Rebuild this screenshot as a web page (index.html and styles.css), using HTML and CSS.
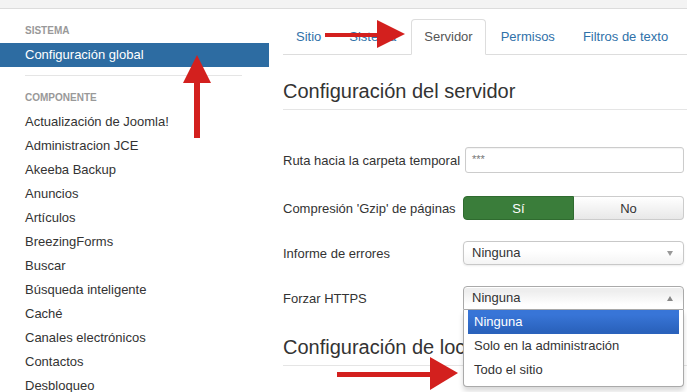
FILE: index.html
```html
<!DOCTYPE html>
<html lang="es">
<head>
<meta charset="utf-8">
<title>Configuración global</title>
<link rel="stylesheet" href="styles.css">
</head>
<body>
<div class="topbar"></div>
<div class="layout">
  <aside class="sidebar">
    <div class="nav-header">Sistema</div>
    <a class="nav-item active">Configuración global</a>
    <div class="divider"></div>
    <div class="nav-header">Componente</div>
    <a class="nav-item">Actualización de Joomla!</a>
    <a class="nav-item">Administracion JCE</a>
    <a class="nav-item">Akeeba Backup</a>
    <a class="nav-item">Anuncios</a>
    <a class="nav-item">Artículos</a>
    <a class="nav-item">BreezingForms</a>
    <a class="nav-item">Buscar</a>
    <a class="nav-item">Búsqueda inteligente</a>
    <a class="nav-item">Caché</a>
    <a class="nav-item">Canales electrónicos</a>
    <a class="nav-item">Contactos</a>
    <a class="nav-item">Desbloqueo</a>
  </aside>
  <main class="main">
    <ul class="tabs">
      <li><a class="tab">Sitio</a></li>
      <li><a class="tab">Sistema</a></li>
      <li><a class="tab active">Servidor</a></li>
      <li><a class="tab">Permisos</a></li>
      <li><a class="tab">Filtros de texto</a></li>
    </ul>
    <h2 class="section-title">Configuración del servidor</h2>
    <div class="form">
      <div class="row row-first">
        <label class="label">Ruta hacia la carpeta temporal</label>
        <div class="input">***</div>
      </div>
      <div class="row row-second">
        <label class="label">Compresión 'Gzip' de páginas</label>
        <div class="btn-group">
          <span class="btn btn-yes">Sí</span>
          <span class="btn btn-no">No</span>
        </div>
      </div>
      <div class="row">
        <label class="label">Informe de errores</label>
        <div class="chosen">
          <div class="chosen-single">Ninguna<span class="caret-down"></span></div>
        </div>
      </div>
      <div class="row">
        <label class="label">Forzar HTTPS</label>
        <div class="chosen open">
          <div class="chosen-single">Ninguna<span class="caret-up"></span></div>
          <div class="chosen-drop">
            <ul class="results">
              <li class="result highlighted">Ninguna</li>
              <li class="result">Solo en la administración</li>
              <li class="result">Todo el sitio</li>
            </ul>
          </div>
        </div>
      </div>
    </div>
    <h2 class="section-title second">Configuración de localización</h2>
  </main>
</div>
<svg class="arrows" width="687" height="392" viewBox="0 0 687 392" aria-hidden="true">
  <g fill="#d3201e">
    <rect x="194" y="80" width="6" height="58"/>
    <polygon points="197,55 211,83 183,83"/>
    <rect x="325" y="33" width="55" height="4"/>
    <polygon points="377,20 405,34 377,48"/>
    <rect x="337" y="372" width="95" height="5"/>
    <polygon points="430,357 458,373 430,390"/>
  </g>
</svg>
</body>
</html>
```
FILE: styles.css
```css
* { box-sizing: border-box; }

html, body {
  margin: 0;
  padding: 0;
  height: 100%;
  overflow: hidden;
  background: #fff;
}

body {
  position: relative;
  font-family: "Liberation Sans", Arial, sans-serif;
  font-size: 13px;
  color: #333;
}

.topbar {
  height: 9px;
  background: #f3f3f3;
  border-bottom: 1px solid #dcdcdc;
}

.layout {
  display: flex;
}

.sidebar {
  width: 269px;
  flex: none;
  padding-top: 10px;
  display: flex;
  flex-direction: column;
}

.nav-header {
  padding-left: 25px;
  line-height: 24px;
  font-size: 10px;
  font-weight: bold;
  text-transform: uppercase;
  color: #999;
}

.nav-item {
  display: block;
  padding-left: 25px;
  line-height: 24px;
  color: #333;
}

.nav-item.active {
  background: #2d6ca2;
  color: #fff;
}

.divider {
  height: 1px;
  background: #e5e5e5;
  margin: 8px 27px 10px 25px;
}

.main {
  flex: 1;
  min-width: 0;
  padding-left: 14px;
}

.tabs {
  display: flex;
  list-style: none;
  margin: 10px 0 0;
  padding: 0;
  border-bottom: 1px solid #ddd;
}

.tab {
  display: block;
  padding: 8px 12px;
  line-height: 18px;
  margin-right: 2px;
  margin-bottom: -1px;
  border: 1px solid transparent;
  border-radius: 4px 4px 0 0;
  color: #3071a9;
  white-space: nowrap;
}

.tab.active {
  color: #555;
  background: #fff;
  border-color: #ddd #ddd transparent;
}

.section-title {
  margin: 24px 0 0;
  padding-bottom: 6px;
  font-size: 20px;
  font-weight: normal;
  line-height: 24px;
  color: #333;
  border-bottom: 1px solid #e5e5e5;
  white-space: nowrap;
}

.form {
  margin-top: 37px;
}

.row {
  display: flex;
  align-items: center;
  height: 26px;
  margin-top: 19px;
}

.row-first {
  margin-top: 0;
}

.row-second {
  margin-top: 22px;
}

.label {
  width: 180px;
  flex: none;
  white-space: nowrap;
}

.input {
  width: 219px;
  height: 26px;
  margin-left: 2px;
  border: 1px solid #ccc;
  border-radius: 3px;
  padding: 3px 6px;
  color: #777;
  font-size: 11px;
  line-height: 16px;
  box-shadow: inset 0 1px 1px rgba(0,0,0,0.05);
}

.btn-group {
  display: flex;
  width: 221px;
  height: 24px;
}

.btn {
  flex: 1;
  display: flex;
  align-items: center;
  justify-content: center;
  border: 1px solid #ccc;
}

.btn-yes {
  background: #3a7d3a;
  border-color: #2f6b2f;
  color: #fff;
  border-radius: 4px 0 0 4px;
}

.btn-no {
  background: linear-gradient(#fff, #e8e8e8);
  border-left: 0;
  border-radius: 0 4px 4px 0;
  color: #333;
}

.chosen {
  position: relative;
  width: 221px;
  height: 24px;
}

.chosen-single {
  position: relative;
  height: 24px;
  line-height: 22px;
  padding-left: 8px;
  border: 1px solid #c8c8c8;
  border-radius: 4px;
  background: linear-gradient(#fff 40%, #f4f4f4);
  box-shadow: 0 1px 2px rgba(0,0,0,0.08);
  color: #333;
}

.open .chosen-single {
  border-color: #aaa;
  border-radius: 4px 4px 0 0;
  background: linear-gradient(#eee 20%, #fff 80%);
  box-shadow: 0 1px 0 #fff inset;
}

.caret-down, .caret-up {
  position: absolute;
  right: 10px;
  top: 9px;
  width: 0;
  height: 0;
  border-left: 3.5px solid transparent;
  border-right: 3.5px solid transparent;
}

.caret-down {
  border-top: 5px solid #999;
}

.caret-up {
  border-bottom: 5px solid #888;
}

.chosen-drop {
  position: absolute;
  top: 100%;
  left: 0;
  right: 0;
  background: #fff;
  border: 1px solid #aaa;
  border-top: 0;
  border-radius: 0 0 4px 4px;
  box-shadow: 0 4px 5px rgba(0,0,0,0.15);
  z-index: 5;
}

.results {
  list-style: none;
  margin: 0 4px 4px 0;
  padding: 0 0 0 4px;
}

.result {
  padding: 0 6px;
  line-height: 24px;
  color: #333;
  white-space: nowrap;
}

.result.highlighted {
  background: linear-gradient(#3875d7 20%, #2a62bc 90%);
  color: #fff;
}

.arrows {
  position: absolute;
  left: 0;
  top: 0;
  pointer-events: none;
  z-index: 10;
}
```
